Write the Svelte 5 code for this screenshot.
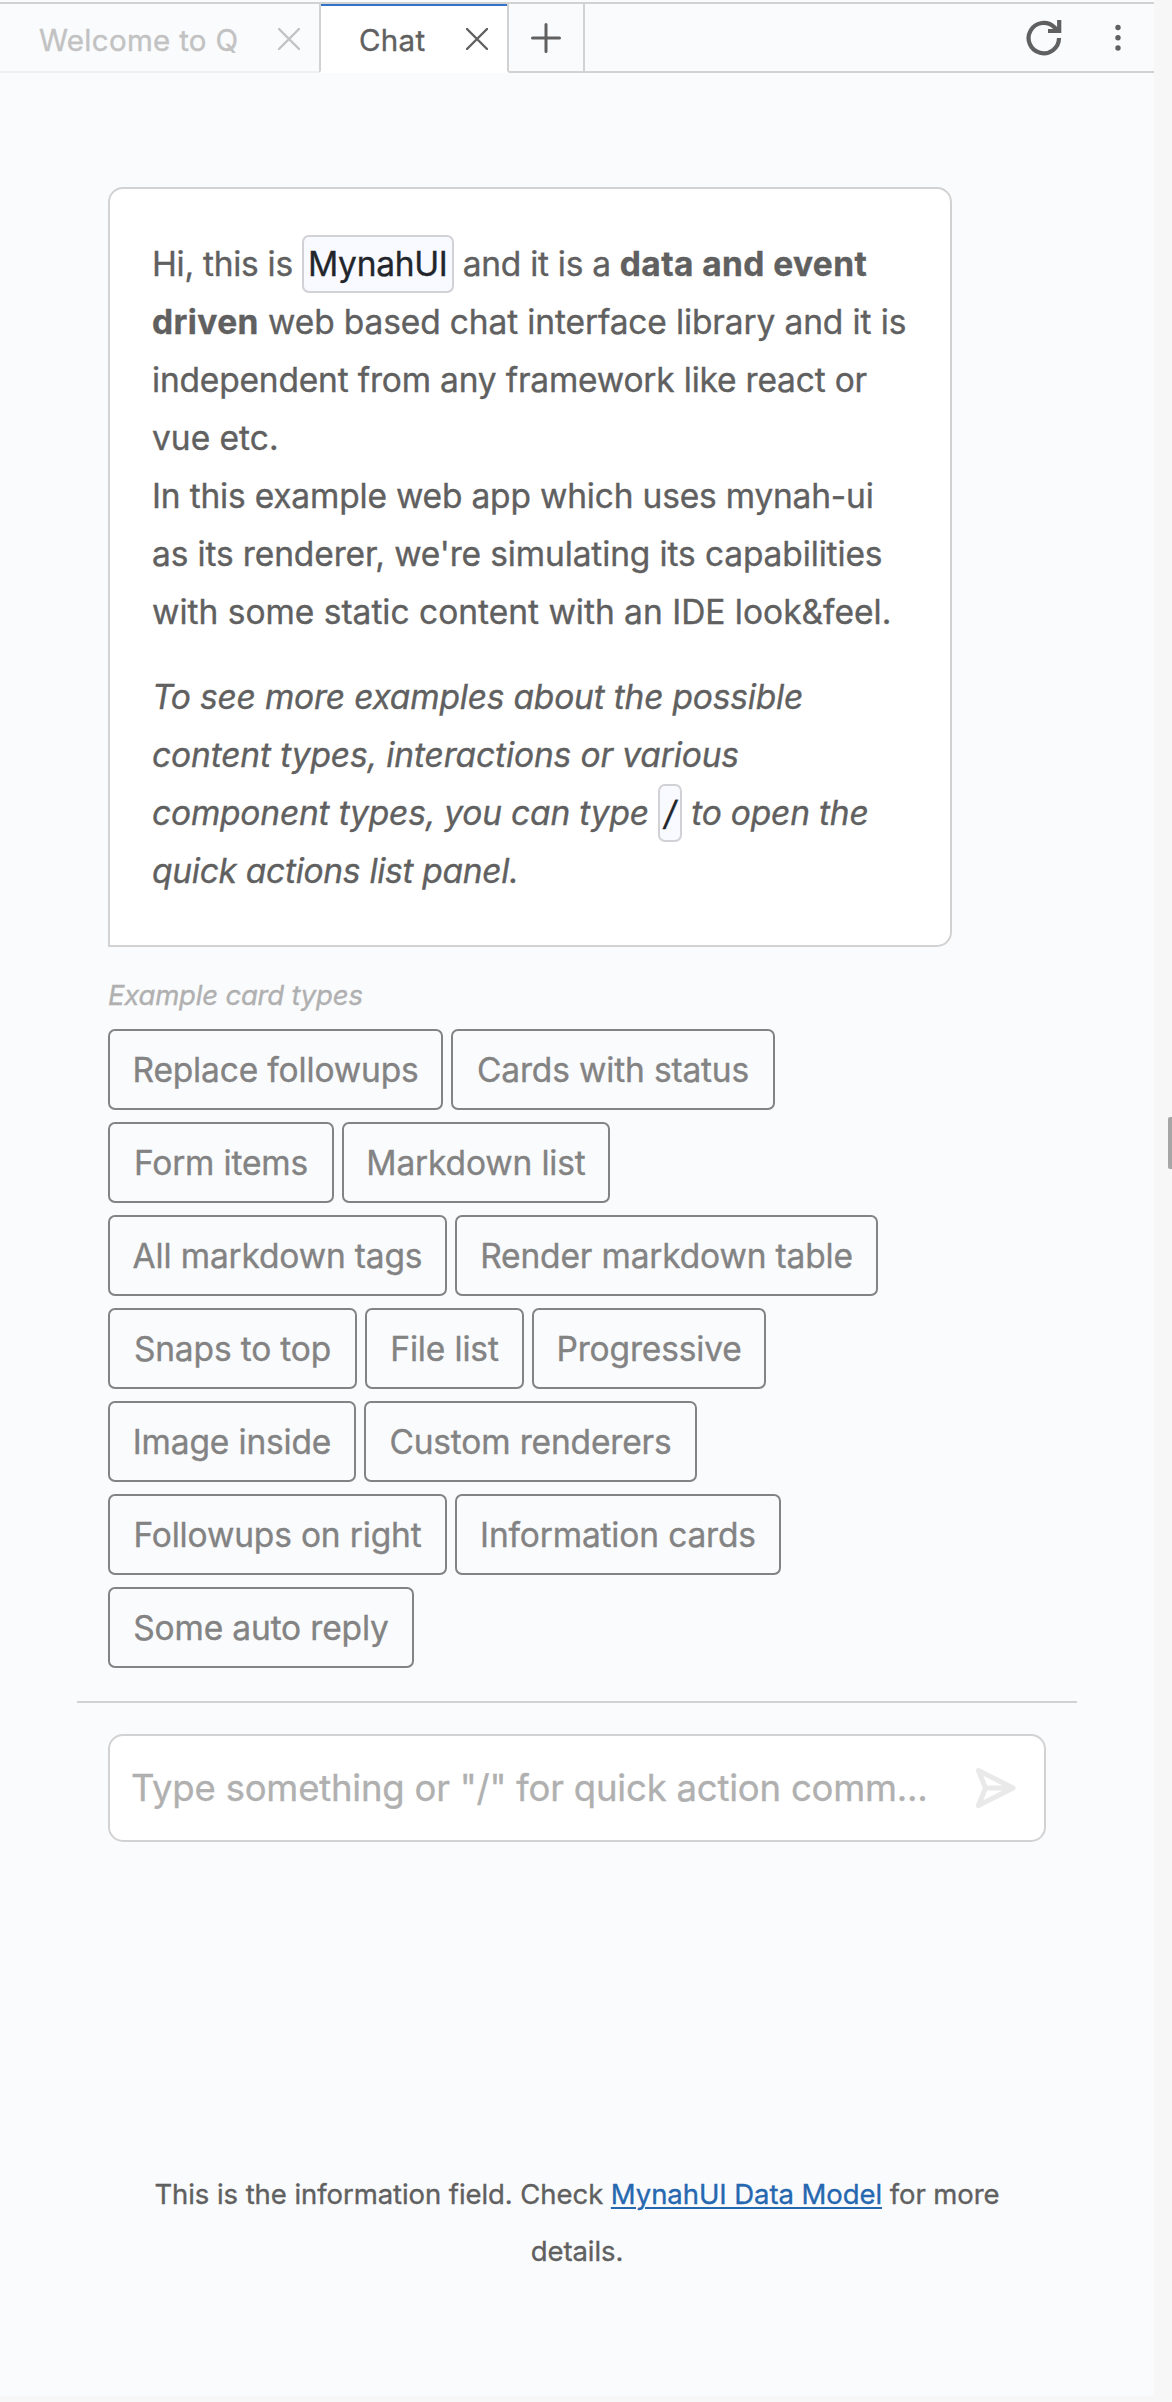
<script>
  const rows = [
    [['Replace followups', 335], ['Cards with status', 324]],
    [['Form items', 226], ['Markdown list', 268]],
    [['All markdown tags', 339], ['Render markdown table', 423]],
    [['Snaps to top', 249], ['File list', 159], ['Progressive', 234]],
    [['Image inside', 248], ['Custom renderers', 333]],
    [['Followups on right', 339], ['Information cards', 326]],
    [['Some auto reply', 306]]
  ];
</script>

<div class="page">
  <main class="panel">
    <nav class="tabs">
      <div class="tab">
        <span>Welcome to Q</span>
        <svg class="close" viewBox="0 0 22 22"><path d="M1 1 21 21M21 1 1 21" /></svg>
      </div>
      <div class="tab active">
        <span>Chat</span>
        <svg class="close" viewBox="0 0 22 22"><path d="M1 1 21 21M21 1 1 21" /></svg>
      </div>
      <div class="add"><svg viewBox="0 0 30 30"><path d="M15 1.5V28.5M1.5 15H28.5" /></svg></div>
      <div class="tools">
        <svg class="refresh" viewBox="0 0 36 36"><path d="M33 18A15.2 15.2 0 1 1 28.6 7.4L32 11" /><path d="M22 11H33.2V0" /></svg>
        <svg class="dots" viewBox="0 0 6 28"><circle cx="3" cy="3.5" r="2.7" /><circle cx="3" cy="13.7" r="2.7" /><circle cx="3" cy="24" r="2.7" /></svg>
      </div>
    </nav>

    <section class="card">
      <p>
        <span class="t3">Hi, this is <code>MynahUI</code> and it is a <b>data and event</b></span><br />
        <span class="t1"><b>driven</b> web based chat interface library and it is</span><br />
        <span class="t2">independent from any framework like react or</span><br />
        <span>vue etc.</span><br />
        <span class="t2">In this example web app which uses mynah-ui</span><br />
        <span class="t1">as its renderer, we're simulating its capabilities</span><br />
        <span>with some static content with an IDE look&amp;feel.</span>
      </p>
      <p class="tip">
        <span class="t2">To see more examples about the possible</span><br />
        <span class="t1">content types, interactions or various</span><br />
        <span class="t2">component types, you can type <code>/</code> to open the</span><br />
        <span class="t3">quick actions list panel.</span>
      </p>
    </section>

    <h2>Example card types</h2>
    <div class="followups">
      {#each rows as row}
        <div class="row">{#each row as [label, width]}<button style:width="{width}px">{label}</button>{/each}</div>
      {/each}
    </div>

    <hr />
    <div class="prompt">
      <span>Type something or "/" for quick action comm...</span>
      <svg viewBox="0 0 40 40"><path d="M2.5 2.5 37 20 2.5 37.500 9.500 20ZM9.500 20H36" /></svg>
    </div>

    <footer>
      This is the information field. Check <a href="#model">MynahUI Data Model</a> for more<br />details.
    </footer>
  </main>
  <div class="scroll"></div>
</div>

<style>
  :global(body) { background: #f7f7f7; }
  .page { position: relative; height: 2402px; font-family: Inter, 'Liberation Sans', sans-serif; color: #606060; -webkit-text-stroke: 0.35px currentColor; }
  .panel { width: 1154px; height: 2396px; background: #fafbfd; overflow: hidden; }
  .tabs { display: flex; box-sizing: border-box; height: 73px; padding-top: 2px; }
  .tab, .add, .tools { box-sizing: border-box; height: 71px; border-top: 2px solid #d2d2d2; border-bottom: 2px solid #d2d2d2; display: flex; align-items: center; }
  .tab { width: 319px; padding: 0 19px 0 39px; justify-content: space-between; font-size: 29.500px; letter-spacing: 0.3px; color: #c2c2c2; border-bottom-color: #f0f0f0; }
  .tab span { padding-top: 5px; }
  .tab .close { margin-top: 2px; }
  .tab.active { width: 190px; background: #fff; border-left: 2px solid #d2d2d2; border-right: 2px solid #d2d2d2; border-bottom-color: #fff; box-shadow: inset 0 2px #3273c8; color: #606060; padding: 0 19px 0 38px; }
  .add { width: 76px; border-right: 2px solid #d2d2d2; padding-left: 22px; }
  .tools { flex: 1; justify-content: flex-end; padding-right: 33px; gap: 53px; }
  svg { display: block; fill: none; stroke: currentColor; flex: none; }
  .close { width: 22px; height: 22px; stroke-width: 2.4; stroke-linecap: round; }
  .add svg { width: 30px; height: 30px; stroke-width: 3; stroke-linecap: round; }
  .refresh { width: 36px; height: 36px; stroke-width: 4.2; }
  .dots { width: 6px; height: 28px; fill: currentColor; stroke: none; }
  .card { box-sizing: border-box; margin: 114px 0 0 108px; width: 844px; height: 760px; border: 2px solid #d2d2d2; border-radius: 15px 15px 15px 0; background: #fff; padding: 46px 42px; font-size: 33.500px; line-height: 58px; white-space: nowrap; }
  p { margin: 0; }
  .tip { margin-top: 27px; font-style: italic; }
  b { letter-spacing: 0.4px; }
  .t1 { letter-spacing: -0.13px; }
  .t2 { letter-spacing: -0.19px; }
  .t3 { letter-spacing: -0.28px; }
  code { font: inherit; color: #22262c; background: #f9faff; border: 2px solid #d2d2d6; border-radius: 7px; padding: 7px 4px; }
  h2 { margin: 26px 0 0 108px; height: 56px; line-height: 44px; font-size: 27.500px; letter-spacing: -0.2px; font-weight: 400; font-style: italic; color: #b0b0b0; }
  .followups { margin-left: 108px; display: grid; gap: 12px; }
  .row { display: flex; gap: 8px; height: 81px; }
  button { box-sizing: border-box; font: 33.500px/75px Inter, 'Liberation Sans', sans-serif; letter-spacing: -0.16px; color: #838383; background: none; border: 2px solid #838383; border-radius: 7px; padding: 2px 0 0; height: 81px; white-space: nowrap; }
  hr { margin: 33px 77px 31px; border: 0; height: 2px; background: #d2d2d2; }
  .prompt { box-sizing: border-box; width: 938px; height: 108px; margin-left: 108px; border: 2px solid #d2d2d2; border-radius: 15px; background: #fff; display: flex; justify-content: space-between; align-items: center; padding: 0 28px 0 21px; font-size: 36.500px; letter-spacing: -0.21px; color: #b0b0b0; }
  .prompt svg { width: 40px; height: 40px; color: #e9e9e9; stroke-width: 5; stroke-linejoin: round; }
  footer { margin-top: 324px; text-align: center; font-size: 27.500px; line-height: 57px; letter-spacing: -0.07px; }
  a { color: #2668b0; text-underline-offset: 3px; text-decoration-thickness: 2px; text-decoration-skip-ink: auto; }
  .scroll { position: absolute; right: 0; top: 1117px; width: 4px; height: 52px; border-radius: 2px 0 0 2px; background: #a6a6a6; }
</style>
